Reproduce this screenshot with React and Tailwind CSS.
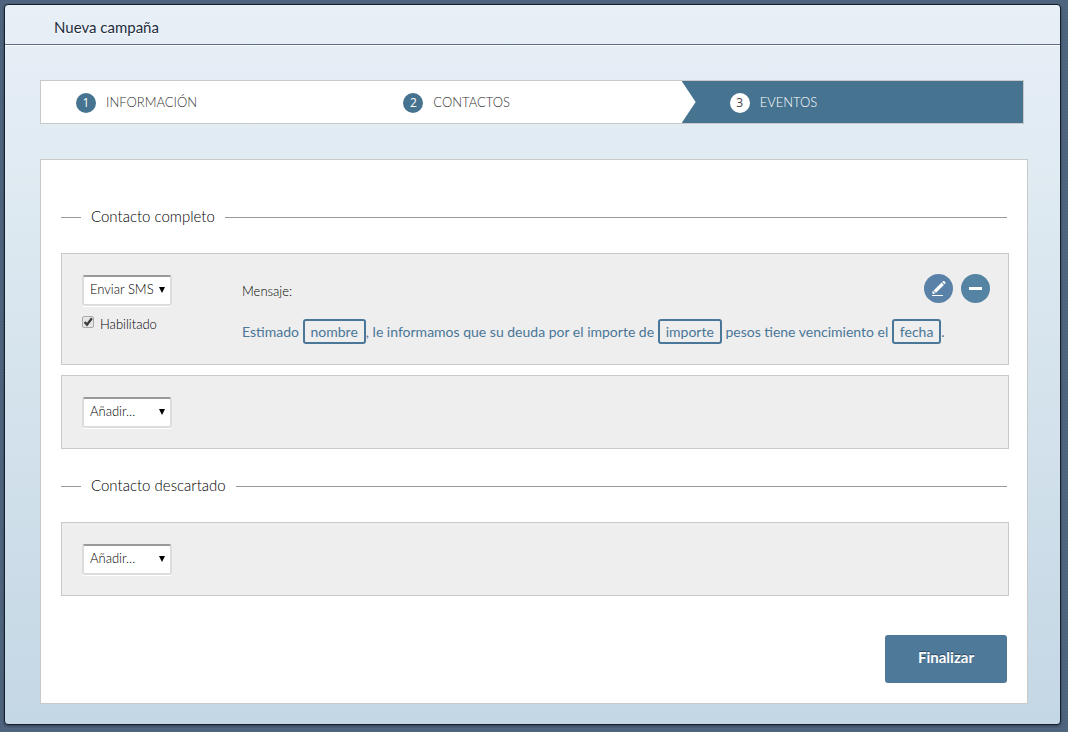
import { useState } from 'react';
import clsx from 'clsx';

const STEPS = ['INFORMACIÓN', 'CONTACTOS', 'EVENTOS'];
const CURRENT_STEP = 2;

const Stepper = () => (
  <ol className="mr-1 grid grid-cols-3 border border-[#c9c9c9] bg-white">
    {STEPS.map((label, index) => {
      const active = index === CURRENT_STEP;
      return (
        <li
          key={label}
          aria-current={active ? 'step' : undefined}
          className={clsx(
            'flex h-[42px] items-start gap-2.5 text-[13px] leading-5',
            active
              ? '-ml-3.5 bg-[#467390] pl-12 text-white [clip-path:polygon(0_0,100%_0,100%_100%,0_100%,14px_50%)]'
              : 'pl-[35px] text-[#333]'
          )}
        >
          <span
            className={clsx(
              "mt-3 flex size-5 items-center justify-center rounded-full font-['Open_Sans',sans-serif] text-[12px] font-normal",
              active ? 'bg-white text-[#444]' : 'bg-[#467390] text-white'
            )}
          >
            {index + 1}
          </span>
          <span className="pt-[11px]">{label}</span>
        </li>
      );
    })}
  </ol>
);

const SectionTitle = ({ children }) => (
  <div className="mr-0.5 flex items-center gap-2.5">
    <span className="h-px w-5 bg-[#999]" />
    <h2 className="pb-0.5 text-[15px] leading-[22px] text-black">{children}</h2>
    <span className="h-px flex-1 bg-[#999]" />
  </div>
);

const ActionSelect = ({ label, options }) => (
  <div className="relative w-[90px]">
    <select
      aria-label={label}
      className="block h-[31px] w-full appearance-none rounded-[3px] border-2 border-[#dcdcdc] border-t-[#999] bg-white pb-0.5 pl-1.5 text-[13px] font-light text-black shadow-[0_1px_0_#fff]"
    >
      {options.map((option) => (
        <option key={option}>{option}</option>
      ))}
    </select>
    <svg viewBox="0 0 6 6" className="pointer-events-none absolute right-[7px] top-3 size-1.5" aria-hidden="true">
      <path d="M0 0h6L3 6z" fill="#000" />
    </svg>
  </div>
);

const Card = ({ children }) => (
  <div className="border border-[#c9c9c9] bg-[#eee] px-5 pt-[21px] pb-5">{children}</div>
);

const Variable = ({ children }) => (
  <span className="rounded-[3px] border-2 border-[#4a7698] px-1.5 py-0.5">{children}</span>
);

const SmsCard = () => {
  const [enabled, setEnabled] = useState(true);

  return (
    <Card>
      <div className="flex min-h-[69px] items-start">
        <div className="w-40 shrink-0">
          <ActionSelect label="Acción" options={['Enviar SMS', 'Enviar email']} />
          <label className="mt-2 flex items-center gap-1.5 text-[13px] leading-5 text-black">
            <span className="relative mb-1 size-3">
              <input
                type="checkbox"
                checked={enabled}
                onChange={(e) => setEnabled(e.target.checked)}
                className="block size-3 appearance-none rounded-[2px] border border-[#aaa] bg-[#e6e6e6]"
              />
              {enabled && (
                <svg viewBox="0 0 12 12" className="pointer-events-none absolute inset-0 size-3" aria-hidden="true">
                  <path d="M2.6 6l2.4 2.6 4.9-6.4" fill="none" stroke="#3c3c3c" strokeWidth="2.3" />
                </svg>
              )}
            </span>
            Habilitado
          </label>
        </div>
        <div className="flex-1">
          <div className="flex h-[30px] items-start justify-between">
            <p className="pt-1.5 text-[13px] leading-5 text-black">Mensaje:</p>
            <div className="-mt-px -mr-0.5 flex gap-2">
              <button
                type="button"
                aria-label="Editar"
                className="flex size-[29px] items-center justify-center rounded-full bg-[#5a82a8]"
              >
                <svg viewBox="0 0 29 29" className="size-[29px]" fill="#fff" aria-hidden="true">
                  <path d="M18.2 8l1-.9q.5-.4 1 0l1.2 1.2q.4.5 0 1l-.9.9z" />
                  <path d="M17.6 8.6l2.3 2.3-7.9 7.9-2.4-2.4z" />
                  <path d="M8.8 16.8l2.6 2.5-2 .8-1.2-1.2z" />
                  <path d="M8 21h11v1H8z" />
                </svg>
              </button>
              <button
                type="button"
                aria-label="Quitar"
                className="flex size-[29px] items-center justify-center rounded-full bg-[#5583a3]"
              >
                <svg viewBox="0 0 29 29" className="size-[29px]" aria-hidden="true">
                  <path d="M8 13h13v3H8z" fill="#fff" />
                </svg>
              </button>
            </div>
          </div>
          <p className="mt-[15px] whitespace-nowrap text-[14px] font-normal leading-6 text-[#4a7698]">
            Estimado <Variable>nombre</Variable>, le informamos que su deuda por el importe de{' '}
            <Variable>importe</Variable> pesos tiene vencimiento el <Variable>fecha</Variable>.
          </p>
        </div>
      </div>
    </Card>
  );
};

const AddCard = ({ label }) => (
  <Card>
    <ActionSelect label={label} options={['Añadir...', 'Enviar SMS', 'Enviar email']} />
  </Card>
);

export default function App() {
  return (
    <div className="min-h-screen bg-[#4e647e] bg-[repeating-linear-gradient(0deg,#ffffff06_0_1px,transparent_1px_3px),repeating-linear-gradient(90deg,#00000008_0_1px,transparent_1px_4px)] pt-1 pr-[7px] pb-[7px] pl-1 font-['Lato','Open_Sans',sans-serif] font-light">
      <div className="flex min-h-[calc(100vh-11px)] flex-col rounded-[4px] border border-[#14202e] bg-linear-to-b from-[#e8eff7] via-[#dfeaf1] via-25% to-[#c4d7e5] shadow-[0_1px_3px_#0006]">
        <header className="border-b border-[#5c6e88] pt-[11px] pb-[5px] pl-[49px] shadow-[0_1px_0_#fff]">
          <h1 className="text-[15px] font-normal leading-[23px] text-[#1d2c3f] [text-shadow:0_1px_0_#fff]">
            Nueva campaña
          </h1>
        </header>
        <main className="pt-[35px] pr-8 pb-5 pl-[35px]">
          <Stepper />
          <form
            className="mt-[35px] border border-[#c9c9c9] bg-white pt-[45px] pr-[18px] pb-5 pl-5"
            onSubmit={(e) => e.preventDefault()}
          >
            <SectionTitle>Contacto completo</SectionTitle>
            <div className="mt-6 flex flex-col gap-2.5">
              <SmsCard />
              <AddCard label="Añadir acción a contacto completo" />
            </div>
            <div className="mt-[25px]">
              <SectionTitle>Contacto descartado</SectionTitle>
            </div>
            <div className="mt-6">
              <AddCard label="Añadir acción a contacto descartado" />
            </div>
            <div className="mt-[39px] mr-0.5 flex justify-end">
              <button
                type="submit"
                className="h-12 w-[122px] rounded-[3px] bg-[#4f7999] pb-1 text-[15px] font-bold text-white [text-shadow:0_-1px_0_#2c4a63]"
              >
                Finalizar
              </button>
            </div>
          </form>
        </main>
      </div>
    </div>
  );
}
